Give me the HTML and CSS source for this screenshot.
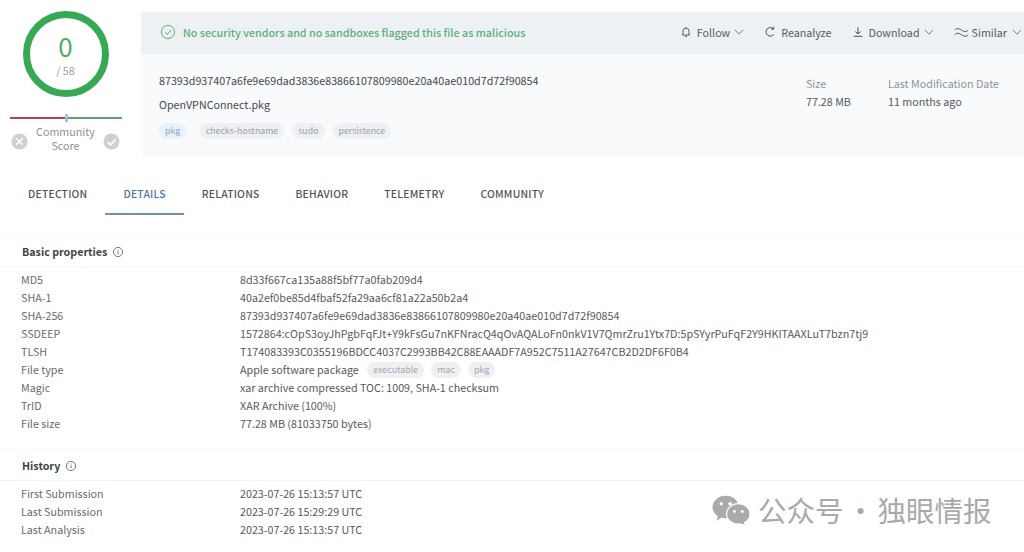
FILE: index.html
```html
<!DOCTYPE html>
<html lang="en">
<head>
<meta charset="utf-8">
<title>VirusTotal details</title>
<link rel="stylesheet" href="styles.css">
</head>
<body>
<div class="page">
  <header class="top">
    <aside class="score">
      <div class="ring">
        <span class="zero">0</span>
        <span class="total">/ 58</span>
      </div>
      <div class="vote-bar"><i class="bar-red"></i><i class="bar-mark"></i><i class="bar-green"></i></div>
      <div class="community">
        <svg class="vote" viewBox="0 0 18 18"><circle cx="9" cy="9" r="8.5" fill="#cfd0d1"/><path d="M5.5 5.5l7 7M12.5 5.5l-7 7" stroke="#fff" stroke-width="1.6" fill="none"/></svg>
        <span class="community-label">Community<br>Score</span>
        <svg class="vote" viewBox="0 0 18 18"><circle cx="9" cy="9" r="8.5" fill="#cfd0d1"/><path d="M5 9.5l3 3 5.5-6" stroke="#fff" stroke-width="1.6" fill="none"/></svg>
      </div>
    </aside>
    <section class="panel">
      <div class="banner">
        <div class="verdict">
          <svg class="ok" viewBox="0 0 16 16"><circle cx="8" cy="8" r="6.6" fill="none" stroke="#5cae7c" stroke-width="1"/><path d="M5 8.2l2.2 2.2L11 6" fill="none" stroke="#5cae7c" stroke-width="1"/></svg>
          <span>No security vendors and no sandboxes flagged this file as malicious</span>
        </div>
        <nav class="actions">
          <span class="action"><svg class="ic" viewBox="0 0 14 14"><path d="M3.5 10.5V6a3.5 3.5 0 0 1 7 0v4.5M2.5 10.5h9M7 1v1.2M5.8 12.3h2.4" fill="none" stroke="#444" stroke-width="1"/></svg>Follow<svg class="chev" viewBox="0 0 12 7"><path d="M1 1l5 5 5-5" fill="none" stroke="#666" stroke-width="1"/></svg></span>
          <span class="action"><svg class="ic" viewBox="0 0 14 14"><path d="M11 3.4A5 5 0 1 0 11.6 9.5M8.4 3.6H11.4V.8" fill="none" stroke="#444" stroke-width="1.1"/></svg>Reanalyze</span>
          <span class="action"><svg class="ic" viewBox="0 0 14 14"><path d="M7 1.5v7.5M4 6.5L7 9.2l3-2.7M2 12h10" fill="none" stroke="#444" stroke-width="1.1"/></svg>Download<svg class="chev" viewBox="0 0 12 7"><path d="M1 1l5 5 5-5" fill="none" stroke="#666" stroke-width="1"/></svg></span>
          <span class="action si"><svg class="ic wide" viewBox="0 0 16 12"><path d="M1 4c2-2.5 3.5-2 7 0s5 2.200 7 0M1 9c2-2.500 3.500-2 7 0s5 2.200 7 0" fill="none" stroke="#444" stroke-width="1"/></svg>Similar<svg class="chev" viewBox="0 0 12 7"><path d="M1 1l5 5 5-5" fill="none" stroke="#666" stroke-width="1"/></svg></span>
        </nav>
      </div>
      <div class="file">
        <div class="file-main">
          <div class="hash">87393d937407a6fe9e69dad3836e83866107809980e20a40ae010d7d72f90854</div>
          <div class="name">OpenVPNConnect.pkg</div>
          <div class="tags">
            <span class="tag tag-blue">pkg</span>
            <span class="tag">checks-hostname</span>
            <span class="tag">sudo</span>
            <span class="tag">persistence</span>
          </div>
        </div>
        <div class="meta">
          <div class="meta-item size"><span class="meta-key">Size</span><span class="meta-val">77.28 MB</span></div>
          <div class="meta-item"><span class="meta-key">Last Modification Date</span><span class="meta-val">11 months ago</span></div>
        </div>
      </div>
    </section>
  </header>

  <nav class="tabs">
    <span class="tab">DETECTION</span>
    <span class="tab active">DETAILS</span>
    <span class="tab">RELATIONS</span>
    <span class="tab">BEHAVIOR</span>
    <span class="tab">TELEMETRY</span>
    <span class="tab">COMMUNITY</span>
  </nav>

  <section class="block basic">
    <h2 class="block-title">Basic properties<svg class="info" viewBox="0 0 12 12"><circle cx="6" cy="6" r="4.6" fill="none" stroke="#666" stroke-width=".9"/><path d="M6 5.300v3M6 3.500v1" stroke="#666" stroke-width=".9"/></svg></h2>
    <dl class="rows">
      <div class="row"><dt>MD5</dt><dd>8d33f667ca135a88f5bf77a0fab209d4</dd></div>
      <div class="row"><dt>SHA-1</dt><dd>40a2ef0be85d4fbaf52fa29aa6cf81a22a50b2a4</dd></div>
      <div class="row"><dt>SHA-256</dt><dd>87393d937407a6fe9e69dad3836e83866107809980e20a40ae010d7d72f90854</dd></div>
      <div class="row"><dt>SSDEEP</dt><dd>1572864:cOpS3oyJhPgbFqFJt+Y9kFsGu7nKFNracQ4qOvAQALoFn0nkV1V7QmrZru1Ytx7D:5pSYyrPuFqF2Y9HKITAAXLuT7bzn7tj9</dd></div>
      <div class="row"><dt>TLSH</dt><dd>T174083393C0355196BDCC4037C2993BB42C88EAAADF7A952C7511A27647CB2D2DF6F0B4</dd></div>
      <div class="row"><dt>File type</dt><dd>Apple software package<span class="chip first">executable</span><span class="chip">mac</span><span class="chip">pkg</span></dd></div>
      <div class="row"><dt>Magic</dt><dd>xar archive compressed TOC: 1009, SHA-1 checksum</dd></div>
      <div class="row"><dt>TrID</dt><dd>XAR Archive (100%)</dd></div>
      <div class="row"><dt>File size</dt><dd>77.28 MB (81033750 bytes)</dd></div>
    </dl>
  </section>

  <section class="block history">
    <h2 class="block-title">History<svg class="info" viewBox="0 0 12 12"><circle cx="6" cy="6" r="4.6" fill="none" stroke="#666" stroke-width=".9"/><path d="M6 5.300v3M6 3.500v1" stroke="#666" stroke-width=".9"/></svg></h2>
    <dl class="rows">
      <div class="row"><dt>First Submission</dt><dd>2023-07-26 15:13:57 UTC</dd></div>
      <div class="row"><dt>Last Submission</dt><dd>2023-07-26 15:29:29 UTC</dd></div>
      <div class="row"><dt>Last Analysis</dt><dd>2023-07-26 15:13:57 UTC</dd></div>
    </dl>
  </section>

  <div class="watermark">
    <svg class="wechat" viewBox="0 0 40 30"><ellipse cx="14" cy="12" rx="13.500" ry="11.500" fill="#aaa"/><path d="M6 20l-1 6 6-4z" fill="#aaa"/><ellipse cx="27" cy="19" rx="12" ry="10.500" fill="#aaa" stroke="#fff" stroke-width="1.200"/><path d="M32 27l2 3-6-2z" fill="#aaa"/><circle cx="9.500" cy="8.500" r="1.800" fill="#fff"/><circle cx="18.500" cy="8.500" r="1.800" fill="#fff"/><circle cx="23" cy="16.500" r="1.500" fill="#fff"/><circle cx="31" cy="16.500" r="1.500" fill="#fff"/></svg>
    <span class="wm-text">公众号<span class="wm-dot">·</span>独眼情报</span>
  </div>
</div>
</body>
</html>
```
FILE: styles.css
```css
* { box-sizing: border-box; }
html, body { margin: 0; padding: 0; background: #fff; }
body {
  font-family: "Noto Sans CJK SC", "Noto Sans", sans-serif;
  font-size: 10.720px;
  color: #4a4f55;
  overflow: hidden;
}
.page {
  position: relative;
  width: 1024px;
  height: 552px;
  overflow: hidden;
  padding-top: 11px;
}
.top { display: flex; height: 145px; }
.score {
  width: 141px;
  flex: none;
  display: flex;
  flex-direction: column;
  align-items: stretch;
}
.ring {
  width: 86px;
  height: 86px;
  margin-left: 22.500px;
  border: 7px solid #37a853;
  border-radius: 50%;
  display: flex;
  flex-direction: column;
  align-items: center;
  justify-content: center;
}
.zero { font-size: 26px; line-height: 30px; color: #4dae6c; }
.total { font-size: 10.700px; line-height: 14px; color: #9a9fa5; margin-top: 3px; }
.vote-bar {
  display: flex;
  align-items: center;
  width: 112px;
  height: 8px;
  margin: 17px 0 0 10px;
}
.vote-bar i { display: block; height: 1.500px; }
.bar-red { flex: 1; background: #b5434f; }
.bar-green { flex: 1; background: #5fa373; }
.vote-bar .bar-mark { width: 3px; height: 8px; background: #a9bfd8; }
.community {
  display: flex;
  align-items: flex-start;
  justify-content: space-between;
  width: 109px;
  margin: 0 0 0 11px;
}
.vote { width: 17px; height: 17px; margin-top: 11px; }
.community-label { text-align: center; line-height: 14px; color: #8b9095; padding-top: 3px; }

.panel { flex: 1; display: flex; flex-direction: column; background: #f8fafc; height: 144px; margin-top: 1px; }
.banner {
  height: 42px;
  flex: none;
  background: #eef1f4;
  display: flex;
  align-items: center;
  justify-content: space-between;
  padding: 0 0 2px 19px;
}
.verdict { display: flex; align-items: center; gap: 7px; color: #5cae7c; font-weight: 500; }
.ok { width: 16px; height: 16px; }
.actions { display: flex; align-items: center; color: #55595e; }
.action { display: flex; align-items: center; gap: 5px; margin-left: 20px; white-space: nowrap; }
.action.si { gap: 3px; margin-right: 2px; }
.ic { width: 12px; height: 12px; flex: none; }
.ic.wide { width: 15px; height: 12px; }
.chev { width: 10px; height: 6px; flex: none; margin-left: -1px; }
.si .chev { margin-left: 2px; }

.file { flex: 1; display: flex; justify-content: space-between; padding-left: 18px; }
.hash { margin-top: 18px; line-height: 18px; color: #44484d; }
.name { margin-top: 6px; line-height: 18px; color: #44484d; }
.tags { display: flex; gap: 8px; margin-top: 9px; }
.tag { height: 16px; padding: 0 6px; border-radius: 8px; background: #eef0f3; color: #9a9fa4; font-size: 8.800px; line-height: 15px; }
.tag-blue { background: #e8f2fb; color: #8fa7c2; margin-right: 5.500px; }

.meta { display: flex; margin: 21px 6px 0 0; height: 42px; padding: 0 18px; border-left: 1px solid #f3f5f8; border-right: 1px solid #f3f5f8; }
.meta-item { display: flex; flex-direction: column; }
.meta-item.size { width: 82px; }
.meta-key { color: #8d9297; line-height: 18px; }
.meta-val { color: #55595e; line-height: 18px; }

.tabs { display: flex; height: 59px; padding: 0 0 0 10px; }
.tab { padding: 0 18px; height: 59px; line-height: 76px; font-size: 10.400px; font-weight: 500; color: #51565b; letter-spacing: .2px; }
.tab.active { color: #4f77a8; border-bottom: 2px solid #6f93b8; }

.block-title {
  display: flex;
  align-items: center;
  gap: 5px;
  margin: 0;
  padding: 0 0 0 22px;
  height: 31px;
  font-size: 10.700px;
  font-weight: 700;
  color: #3f4348;
  border-top: 1px solid #f9f9fa;
  border-bottom: 1px solid #f3f4f5;
}
.info { width: 12px; height: 12px; }
.basic { margin-top: 21px; }
.history { margin-top: 17px; }
.rows { margin: 4px 0 0; padding: 0; }
.row { display: flex; height: 18px; line-height: 18px; }
.row dt { width: 240px; padding-left: 21px; flex: none; color: #666b70; }
.row dd { margin: 0; color: #55595e; white-space: nowrap; display: flex; align-items: center; }
.chip { height: 16px; padding: 0 6px; border-radius: 8px; background: #eef0f3; color: #a4a8ad; font-size: 8.900px; line-height: 15px; margin-left: 7px; }
.chip.first { margin-left: 8.500px; }

.watermark {
  position: absolute;
  left: 712px;
  top: 493px;
  display: flex;
  align-items: center;
  gap: 7px;
  color: #a9a9a9;
  font-size: 28.500px;
  line-height: 34px;
  white-space: nowrap;
}
.wechat { width: 39px; height: 30px; }
.wm-dot { display: inline-block; width: 34px; text-align: center; }
```
